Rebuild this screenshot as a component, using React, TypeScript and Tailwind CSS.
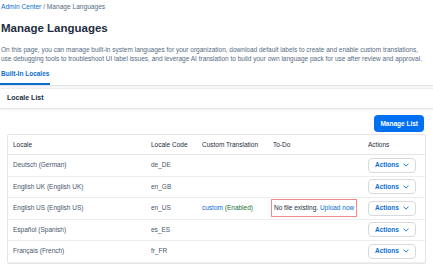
import React from 'react';

const rows = [
  { name: 'Deutsch (German)', code: 'de_DE' },
  { name: 'English UK (English UK)', code: 'en_GB' },
  { name: 'English US (English US)', code: 'en_US', custom: true, todo: true },
  { name: 'Español (Spanish)', code: 'es_ES' },
  { name: 'Français (French)', code: 'fr_FR' },
];

const Chevron = () => (
  <svg width="6" height="4" viewBox="0 0 8 5" fill="none" className="ml-[4px]">
    <path d="M1 1l3 3 3-3" stroke="#0a6ed1" strokeWidth="1.2" strokeLinecap="round" strokeLinejoin="round" />
  </svg>
);

const ActionsButton = () => (
  <button className="flex items-center h-[15px] px-[6px] rounded-[4px] border border-[#d5dadd] bg-white text-[6.5px] font-bold text-[#0a6ed1]">
    Actions
    <Chevron />
  </button>
);

export default function App() {
  return (
    <div className="w-[433px] h-[266px] overflow-hidden bg-white text-[#1d2d3e] font-['Liberation_Sans',Arial,sans-serif]">
      <div className="pl-[1px] pt-[2px] text-[6.6px] leading-[9px] text-[#556b82]">
        <span className="text-[#0a6ed1]">Admin Center</span> / Manage Languages
      </div>

      <h1 className="mt-[10px] pl-[1px] text-[11.5px] leading-[15px] font-bold text-[#1d2d3e]">Manage Languages</h1>

      <p className="mt-[9px] pl-[1px] text-[6.5px] leading-[9px] text-[#556b82] whitespace-nowrap">
        On this page, you can manage built-in system languages for your organization, download default labels to create and enable custom translations,
        <br />
        use debugging tools to troubleshoot UI label issues, and leverage AI translation to build your own language pack for use after review and approval.
      </p>

      <div className="flex mt-[5px] border-b border-[#e5e5e5] shadow-[0_1px_2px_rgba(0,0,0,0.08)]">
        <div className="pl-[1px] pr-[1px] pt-[1px] pb-[5px] border-b-2 border-[#0a6ed1] text-[6.5px] leading-[9px] font-bold text-[#0a6ed1]">
          Built-In Locales
        </div>
      </div>

      <div className="mt-[2px] border-t border-[#eee]">
        <div className="h-[20px] flex items-center pl-[7px] border-b border-[#e5e5e5] shadow-[0_1px_2px_rgba(0,0,0,0.06)] text-[7px] font-bold">
          Locale List
        </div>

        <div className="px-[7px]">
          <div className="flex justify-end pt-[6px] pb-[2px] pr-[2px]">
            <button className="h-[17px] px-[6px] rounded-[4px] bg-[#0070f2] text-white text-[6.5px] font-bold">Manage List</button>
          </div>

          <div className="border border-[#e5e5e5] rounded-[2px]">
            <div className="flex items-center h-[20px] border-b border-[#e5e5e5] text-[6.5px] text-[#1d2d3e]">
              <div className="w-[143px] pl-[5px]">Locale</div>
              <div className="w-[51px]">Locale Code</div>
              <div className="w-[71px]">Custom Translation</div>
              <div className="w-[95px]">To-Do</div>
              <div>Actions</div>
            </div>
            {rows.map((r) => (
              <div key={r.code} className="flex items-center h-[21.5px] border-b border-[#eee] text-[6.5px] text-[#475569]">
                <div className="w-[143px] pl-[5px]">{r.name}</div>
                <div className="w-[51px]">{r.code}</div>
                <div className="w-[71px]">
                  {r.custom && (
                    <span>
                      <span className="text-[#0a6ed1]">custom</span>{' '}
                      <span className="text-[#256f3a]">(Enabled)</span>
                    </span>
                  )}
                </div>
                <div className="w-[95px]">
                  {r.todo && (
                    <span className="inline-block -ml-[2px] px-[2px] py-[3px] border border-[#f28b8b] text-[#1d2d3e]">
                      No file existing. <span className="text-[#0a6ed1]">Upload now</span>
                    </span>
                  )}
                </div>
                <ActionsButton />
              </div>
            ))}
          </div>
        </div>
      </div>
    </div>
  );
}
